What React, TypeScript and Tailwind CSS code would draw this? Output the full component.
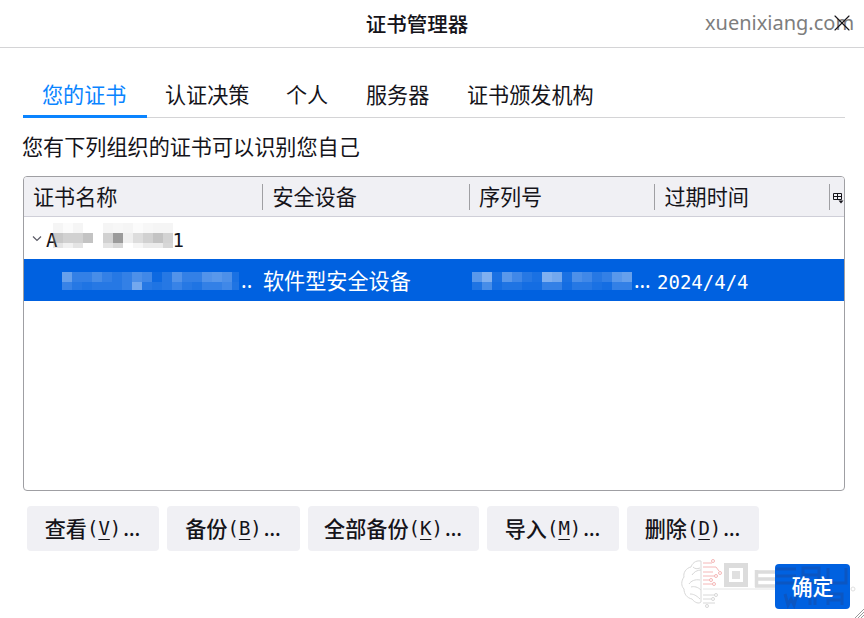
import React from 'react';
import { X } from 'lucide-react';

const cjk = "font-['Noto_Sans_CJK_SC',sans-serif]";
const mono = "font-['DejaVu_Sans_Mono',monospace] text-[19px]";
const dots = "font-['Noto_Sans',sans-serif] text-[21px]";

const tabs = [
  { label: '您的证书', active: true, className: 'w-[124px] pl-[19px]' },
  { label: '认证决策', className: 'w-[121px] pl-[18px]' },
  { label: '个人', className: 'w-[79px] pl-[18px]' },
  { label: '服务器', className: 'w-[102px] pl-[19px]' },
  { label: '证书颁发机构', className: 'w-[166px] pl-[18px]' },
];

const columns = [
  { label: '证书名称', className: 'w-[239px]' },
  { label: '安全设备', className: 'w-[207px]' },
  { label: '序列号', className: 'w-[186px]' },
  { label: '过期时间', className: 'w-[175px]' },
];

const buttons = [
  { label: '查看', key: 'V', className: 'w-[132px]' },
  { label: '备份', key: 'B', className: 'w-[133px]' },
  { label: '全部备份', key: 'K', className: 'w-[171px]' },
  { label: '导入', key: 'M', className: 'w-[132px]' },
  { label: '删除', key: 'D', className: 'w-[132px]' },
];

// mosaic cells for the blurred names, opacity per 10px block
const Mosaic: React.FC<{ width: number; height: number; rows: number[][]; fill: string }> = ({
  width,
  height,
  rows,
  fill,
}) => (
  <svg width={width} height={height} className="shrink-0">
    {rows.map((row, y) =>
      row.map((o, x) => (
        <rect key={`${x}-${y}`} x={x * 10} y={y * 10} width={10} height={10} fill={fill} opacity={o} />
      )),
    )}
  </svg>
);

const selectedName = [
  [0.4, 0.2, 0.2, 0.28, 0.2, 0.15, 0.2, 0.3, 0.25, 0.05, 0.15, 0.32, 0.2, 0.2, 0.32, 0.35, 0.3, 0.1],
  [0.22, 0.15, 0.12, 0.15, 0.15, 0.15, 0.2, 0.45, 0.15, 0.12, 0.15, 0.22, 0.15, 0.12, 0.2, 0.2, 0.25, 0.12],
];
const selectedSerial = [
  [0.35, 0.5, 0.1, 0.35, 0.25, 0.15, 0.1, 0.5, 0.45, 0.1, 0.3, 0.25, 0.15, 0.2, 0.35, 0.4],
  [0.12, 0.28, 0.08, 0.12, 0.12, 0.08, 0.08, 0.2, 0.2, 0.08, 0.15, 0.15, 0.1, 0.08, 0.2, 0.2],
];
const groupA = [
  [0.08, 0.03, 0.08, 0, 0, 0.08, 0.06, 0.08, 0.03, 0.06, 0.08, 0.08],
  [0.41, 0.35, 0.35, 0.45, 0, 0.35, 0.75, 0.12, 0.26, 0.35, 0.45, 0.33],
  [0.2, 0.1, 0.2, 0, 0, 0.2, 0.3, 0, 0.07, 0.15, 0.15, 0.3],
];

export default function App() {
  return (
    <div className={`relative w-[864px] h-[618px] overflow-hidden bg-white text-[21.12px] text-[#15141a] ${cjk}`}>
      <header className="h-[48px] pr-[30px] border-b border-[#d4d4d6] flex items-center justify-center">
        <span className="text-[20.5px] font-medium leading-none">证书管理器</span>
      </header>

      <div className="pl-[23px] pr-[19px]">
        <nav className="mt-[24px] h-[46px] flex border-b border-[#d4d4d6]">
          {tabs.map((t) => (
            <div
              key={t.label}
              className={`${t.className} relative h-[46px] flex items-center pb-[1px] ${t.active ? 'text-[#0a84ff]' : ''}`}
            >
              {t.label}
              {t.active && <div className="absolute left-0 right-0 bottom-0 h-[3px] bg-[#0a84ff]" />}
            </div>
          ))}
        </nav>

        <p className="mt-[13px] h-[30px] -ml-[1px] leading-[30px]">您有下列组织的证书可以识别您自己</p>

        <div className="mt-[15px] h-[315px] border border-[#9f9fa3] rounded-[4px] overflow-hidden flex flex-col">
          <div className="h-[40px] shrink-0 bg-[#f0f0f4] border-b border-[#cfcfd8] flex items-center">
            {columns.map((c, i) => (
              <div
                key={c.label}
                className={`${c.className} h-[26px] flex items-center pl-[9px] ${i > 0 ? 'border-l border-[#9f9fa3]' : ''}`}
              >
                {c.label}
              </div>
            ))}
            <div className="h-[26px] border-l border-[#9f9fa3] flex-1 flex items-center pl-[2px] pt-[2px]">
              <svg width="12" height="12" viewBox="0 0 12 12" fill="none" stroke="#15141a">
                <path d="M1.5 1.5h8v6h-8zM1.5 4.500h8M5.500 1.500v6" />
                <path d="M6.500 8.500h5l-2.500 3z" fill="#15141a" stroke="none" />
              </svg>
            </div>
          </div>

          <div className="h-[42px] shrink-0 flex items-center pl-[7px]">
            <svg width="12" height="12" viewBox="0 0 12 12" fill="none" stroke="#5b5b66" strokeWidth="1.2">
              <path d="M2 4.500l4 4 4-4" />
            </svg>
            <div className="relative ml-[3px] flex items-center w-[138px] h-[30px] pt-[5px]">
              <span className={mono}>A</span>
              <span className={`${mono} ml-[115px]`}>1</span>
              <div className="absolute left-[7px] top-0">
                <Mosaic width={120} height={25} rows={groupA} fill="#7a7a7a" />
              </div>
            </div>
          </div>

          <div className="h-[42px] shrink-0 pt-[2px] bg-[#0061e0] text-white flex items-center">
            <div className="w-[239px] pl-[38px] flex items-center">
              <Mosaic width={177} height={18} rows={selectedName} fill="#ffffff" />
              <span className={`${dots} ml-[2px]`}>..</span>
            </div>
            <div className="w-[209px]">软件型安全设备</div>
            <div className="w-[185px] flex items-center">
              <Mosaic width={161} height={18} rows={selectedSerial} fill="#ffffff" />
              <span className={`${dots} ml-[1px]`}>…</span>
            </div>
            <span className={`${mono} pt-[2px]`}>2024/4/4</span>
          </div>
        </div>
      </div>

      <div className="mt-[15px] pl-[27px] flex gap-[8px]">
        {buttons.map((b) => (
          <div
            key={b.key}
            className={`${b.className} h-[45px] pr-[1px] bg-[#f0f0f4] rounded-[4px] flex items-center justify-center font-medium`}
          >
            {b.label}
            <span className={mono}>
              (<span className="underline underline-offset-[4px]">{b.key}</span>)
            </span>
            <span className={`${dots} ml-[2px]`}>…</span>
          </div>
        ))}
      </div>

      <div className="mt-[13px] pr-[14px] flex justify-end">
        <div className="relative w-[75px] h-[45px] bg-[#0061e0] rounded-[4px] text-white flex items-center justify-center font-medium">
          {/* watermark letters showing through the button */}
          <svg className="absolute left-0 top-0" width="75" height="45" fill="none" stroke="#0b56c2" strokeWidth="3">
            <path d="M1 5h20M1 12h20M1 19h20M28 4h16v15h-16zM28 11h16M53 4v15h18V4" />
            <path d="M10 30l3 11 3-6 3 6 3-11M35 30v11M40 30v11M53 30h14v6h-14v5M67 36v5" />
          </svg>
          <span className="relative">确定</span>
        </div>
      </div>

      {/* site watermark over the title bar */}
      <span className="absolute left-[705px] top-[9px] text-[20px] leading-[28px] text-[#7d7d7d] font-['Noto_Sans',sans-serif]">
        xuenixiang.com
      </span>
      <X className="absolute left-[828px] top-[9px] text-[#15141a]" size={28} strokeWidth={1} />

      {/* DEBUG watermark */}
      <svg className="absolute left-[680px] top-[558px]" width="95" height="52" viewBox="0 0 95 52" fill="none">
        <g stroke="#d8d8d8" strokeWidth="1">
          <path d="M21 3c-6-1-9 3-10 6-5 1-8 6-7 10-3 4-3 9 0 12 0 5 3 9 8 10 3 4 7 5 9 3z" />
          <path d="M21 12c-4 0-7 2-9 5M20 22c-5-1-9 1-11 4M21 32c-3-3-7-4-10-3M13 9c2 2 4 2 7 1M10 36c3 0 6 1 10 5" />
          <path d="M23 37h12M23 41h8M23 45h12" />
          <circle cx="36" cy="37" r="1.5" />
          <circle cx="33" cy="41" r="1.5" />
          <circle cx="27" cy="48" r="1.5" />
        </g>
        <g stroke="#f5b8b8" strokeWidth="1">
          <path d="M23 5h9M23 9h13l3 4M23 14h10M23 18h12M23 22h7M23 26h10" />
          <circle cx="33" cy="3" r="1.500" />
          <circle cx="40" cy="15" r="1.500" />
          <circle cx="36" cy="18" r="1.500" />
          <circle cx="31" cy="22" r="1.500" />
          <circle cx="34" cy="26" r="1.500" />
        </g>
        <path d="M23 31h72" stroke="#e4e4e4" />
        <path d="M46.500 7.500h19v19h-19z" stroke="#dcdcdc" strokeWidth="5" />
        <path d="M52 13h8v8h-8z" fill="#e0e0e0" />
        <path d="M75 14h20M75 21h20M75 28h20M76.500 12v17" stroke="#dcdcdc" strokeWidth="3.500" />
      </svg>
      <svg className="absolute left-[850px] top-[585px]" width="6" height="8" fill="none" stroke="#e0e0e0">
        <circle cx="3" cy="4" r="2" />
      </svg>

      {/* resize grip */}
      <svg className="absolute right-0 bottom-0" width="9" height="9" stroke="#9a9a9a">
        <path d="M9 0L0 9M9 3L3 9M9 6L6 9" />
      </svg>
    </div>
  );
}
